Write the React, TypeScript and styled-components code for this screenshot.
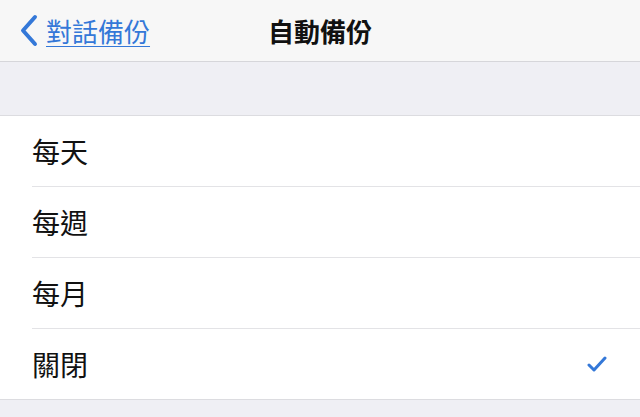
import styled, { createGlobalStyle } from 'styled-components';

const GlobalStyle = createGlobalStyle`
  html, body {
    margin: 0;
    padding: 0;
    background: #efeff4;
    font-family: "Noto Sans CJK TC", "Noto Sans", sans-serif;
  }
`;

const Page = styled.div`
  width: 640px;
  height: 417px;
  overflow: hidden;
  background: #efeff4;
`;

const NavBar = styled.div`
  height: 61px;
  background: #f7f7f7;
  border-bottom: 1px solid #d6d6da;
  display: grid;
  grid-template-columns: 1fr auto 1fr;
  align-items: center;
`;

const BackButton = styled.a`
  display: flex;
  align-items: center;
  gap: 7px;
  padding-left: 19px;
  color: #3478d8;
  font-size: 26px;
  text-decoration: underline;
  text-decoration-thickness: 1px;
  text-underline-offset: 4px;
`;

const Title = styled.div`
  font-size: 26px;
  font-weight: 700;
  color: #111;
`;

const Spacer = styled.div`
  height: 53px;
  border-bottom: 1px solid #dcdce0;
`;

const List = styled.div`
  background: #fff;
  border-bottom: 1px solid #dcdce0;
  padding-left: 32px;
`;

const Row = styled.div<{ $last?: boolean }>`
  height: 70px;
  display: flex;
  align-items: center;
  justify-content: space-between;
  padding-right: 33px;
  border-bottom: ${p => (p.$last ? 'none' : '1px solid #e3e3e6')};
  font-size: 28px;
  color: #111;
`;

const options = ['每天', '每週', '每月', '關閉'];

export default function App() {
  return (
    <Page>
      <GlobalStyle />
      <NavBar>
        <BackButton>
          <svg width="20" height="33" viewBox="0 0 20 33">
            <path d="M16 3 L4 16.5 L16 30" fill="none" stroke="#3478d8" strokeWidth="4" strokeLinecap="round" strokeLinejoin="round" />
          </svg>
          對話備份
        </BackButton>
        <Title>自動備份</Title>
        <div />
      </NavBar>
      <Spacer />
      <List>
        {options.map((o, i) => (
          <Row key={o} $last={i === options.length - 1}>
            {o}
            {o === '關閉' && (
              <svg width="20" height="16" viewBox="0 0 20 16">
                <path d="M2 9 L7 14 L18 2" fill="none" stroke="#3478d8" strokeWidth="3" strokeLinecap="round" strokeLinejoin="round" />
              </svg>
            )}
          </Row>
        ))}
      </List>
    </Page>
  );
}
